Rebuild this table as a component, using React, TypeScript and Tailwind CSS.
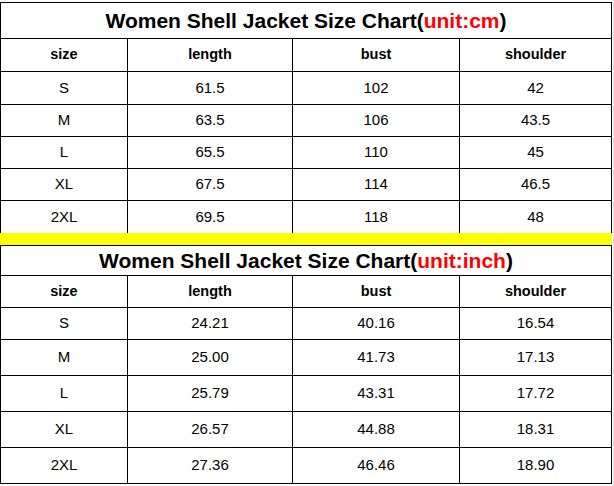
import React from "react";

type Row = { size: string; length: string; bust: string; shoulder: string; h: string };

const cmRows: Row[] = [
  { size: "S", length: "61.5", bust: "102", shoulder: "42", h: "h-[33px]" },
  { size: "M", length: "63.5", bust: "106", shoulder: "43.5", h: "h-[32px]" },
  { size: "L", length: "65.5", bust: "110", shoulder: "45", h: "h-[32px]" },
  { size: "XL", length: "67.5", bust: "114", shoulder: "46.5", h: "h-[32px]" },
  { size: "2XL", length: "69.5", bust: "118", shoulder: "48", h: "h-[33px]" },
];

const inchRows: Row[] = [
  { size: "S", length: "24.21", bust: "40.16", shoulder: "16.54", h: "h-[32px]" },
  { size: "M", length: "25.00", bust: "41.73", shoulder: "17.13", h: "h-[36px]" },
  { size: "L", length: "25.79", bust: "43.31", shoulder: "17.72", h: "h-[36px]" },
  { size: "XL", length: "26.57", bust: "44.88", shoulder: "18.31", h: "h-[36px]" },
  { size: "2XL", length: "27.36", bust: "46.46", shoulder: "18.90", h: "h-[37px] border-b" },
];

function Cells({ vals, h, bold }: { vals: string[]; h: string; bold?: boolean }) {
  const widths = ["w-[127px]", "w-[165px]", "w-[167px]", "w-[153px] border-r"];
  return (
    <div className={`flex border-t border-black ${h}`}>
      {vals.map((v, i) => (
        <div
          key={i}
          className={`${widths[i]} border-l border-black flex items-center justify-center ${
            bold ? "font-bold text-[14.5px]" : "text-[15px]"
          }`}
        >
          {v}
        </div>
      ))}
    </div>
  );
}

function Title({ unit, h }: { unit: string; h: string }) {
  return (
    <div
      className={`flex items-center justify-center border-t border-l border-r border-black ${h} font-bold text-[21px]`}
    >
      <span>
        Women Shell Jacket Size Chart(<span className="text-[#ff0000]">unit:{unit}</span>)
      </span>
    </div>
  );
}

export default function App() {
  return (
    <div className="w-[614px] h-[486px] bg-white text-black font-['Liberation_Sans',Arial,sans-serif] pt-[2px] flex overflow-hidden">
      <div className="w-[612px] flex flex-col">
        <Title unit="cm" h="h-[36px]" />
        <Cells vals={["size", "length", "bust", "shoulder"]} h="h-[33px]" bold />
        {cmRows.map((r) => (
          <Cells key={r.size} vals={[r.size, r.length, r.bust, r.shoulder]} h={r.h} />
        ))}
        <div className="h-[12px] bg-[#ffff00]" />
        <Title unit="inch" h="h-[30px]" />
        <Cells vals={["size", "length", "bust", "shoulder"]} h="h-[32px]" bold />
        {inchRows.map((r) => (
          <Cells key={r.size} vals={[r.size, r.length, r.bust, r.shoulder]} h={r.h} />
        ))}
      </div>
      <div className="ml-px w-px self-stretch bg-[#e2e2e2] -mt-[2px]" />
    </div>
  );
}
